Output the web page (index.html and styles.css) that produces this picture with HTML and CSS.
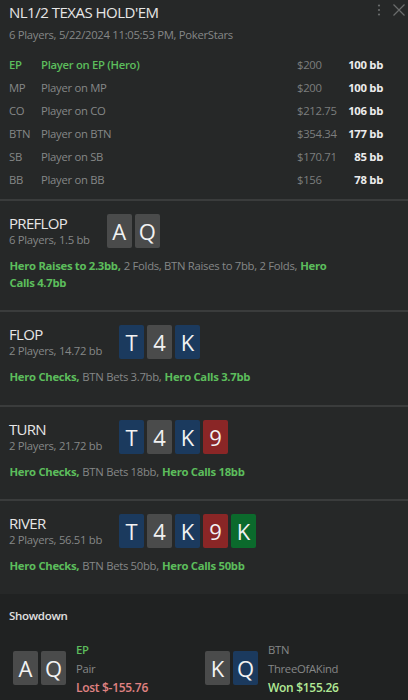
FILE: index.html
```html
<!DOCTYPE html>
<html>
<head>
<meta charset="utf-8">
<link rel="stylesheet" href="styles.css">
</head>
<body>
<div class="panel">
  <section class="header">
    <div class="title-row">
      <h1 class="title">NL1/2 TEXAS HOLD'EM</h1>
      <div class="tools">
        <svg class="kebab" width="4" height="12" viewBox="0 0 4 12"><circle cx="2" cy="1.5" r="1.1" fill="#6a6c6c"/><circle cx="2" cy="6" r="1.1" fill="#6a6c6c"/><circle cx="2" cy="10.5" r="1.1" fill="#6a6c6c"/></svg>
        <svg class="close" width="12" height="12" viewBox="0 0 12 12"><path d="M0.5 0.5 L11.5 11.5 M11.5 0.5 L0.5 11.5" stroke="#6a6c6c" stroke-width="1.2"/></svg>
      </div>
    </div>
    <div class="subtitle">6 Players, 5/22/2024 11:05:53 PM, PokerStars</div>
    <div class="players">
      <div class="prow hero"><span class="pos">EP</span><span class="pname">Player on EP (Hero)</span><span class="stack">$200</span><span class="bb">100 bb</span></div>
      <div class="prow"><span class="pos">MP</span><span class="pname">Player on MP</span><span class="stack">$200</span><span class="bb">100 bb</span></div>
      <div class="prow"><span class="pos">CO</span><span class="pname">Player on CO</span><span class="stack">$212.75</span><span class="bb">106 bb</span></div>
      <div class="prow"><span class="pos">BTN</span><span class="pname">Player on BTN</span><span class="stack">$354.34</span><span class="bb">177 bb</span></div>
      <div class="prow"><span class="pos">SB</span><span class="pname">Player on SB</span><span class="stack">$170.71</span><span class="bb">85 bb</span></div>
      <div class="prow"><span class="pos">BB</span><span class="pname">Player on BB</span><span class="stack">$156</span><span class="bb">78 bb</span></div>
    </div>
  </section>

  <section class="street">
    <div class="street-head">
      <div class="street-info">
        <div class="street-name">PREFLOP</div>
        <div class="street-sub">6 Players, 1.5 bb</div>
      </div>
      <div class="cards">
        <span class="card gray">A</span><span class="card gray">Q</span>
      </div>
    </div>
    <p class="actions"><b>Hero Raises to 2.3bb,</b> 2 Folds, BTN Raises to 7bb, 2 Folds, <b>Hero</b> <b>Calls 4.7bb</b></p>
  </section>

  <section class="street">
    <div class="street-head">
      <div class="street-info">
        <div class="street-name">FLOP</div>
        <div class="street-sub">2 Players, 14.72 bb</div>
      </div>
      <div class="cards">
        <span class="card blue">T</span><span class="card gray">4</span><span class="card blue">K</span>
      </div>
    </div>
    <p class="actions"><b>Hero Checks,</b> BTN Bets 3.7bb, <b>Hero Calls 3.7bb</b></p>
  </section>

  <section class="street">
    <div class="street-head">
      <div class="street-info">
        <div class="street-name">TURN</div>
        <div class="street-sub">2 Players, 21.72 bb</div>
      </div>
      <div class="cards">
        <span class="card blue">T</span><span class="card gray">4</span><span class="card blue">K</span><span class="card red">9</span>
      </div>
    </div>
    <p class="actions"><b>Hero Checks,</b> BTN Bets 18bb, <b>Hero Calls 18bb</b></p>
  </section>

  <section class="street">
    <div class="street-head">
      <div class="street-info">
        <div class="street-name">RIVER</div>
        <div class="street-sub">2 Players, 56.51 bb</div>
      </div>
      <div class="cards">
        <span class="card blue">T</span><span class="card gray">4</span><span class="card blue">K</span><span class="card red">9</span><span class="card green">K</span>
      </div>
    </div>
    <p class="actions"><b>Hero Checks,</b> BTN Bets 50bb, <b>Hero Calls 50bb</b></p>
  </section>

  <section class="showdown">
    <div class="sd-title">Showdown</div>
    <div class="sd-grid">
      <div class="sd-player">
        <div class="cards">
          <span class="card gray">A</span><span class="card gray">Q</span>
        </div>
        <div class="sd-info">
          <div class="sd-pos hero-pos">EP</div>
          <div class="sd-hand">Pair</div>
          <div class="sd-result lost">Lost $-155.76</div>
        </div>
      </div>
      <div class="sd-player">
        <div class="cards">
          <span class="card gray">K</span><span class="card blue">Q</span>
        </div>
        <div class="sd-info">
          <div class="sd-pos">BTN</div>
          <div class="sd-hand">ThreeOfAKind</div>
          <div class="sd-result won">Won $155.26</div>
        </div>
      </div>
    </div>
  </section>
</div>
</body>
</html>
```

FILE: styles.css
```css
* { box-sizing: border-box; }
html, body {
  margin: 0;
  padding: 0;
  background: #262828;
}
body {
  font-family: "Open Sans", "Noto Sans", sans-serif;
  color: #8c8c8c;
  width: 408px;
  height: 700px;
  overflow: hidden;
  letter-spacing: -0.3px;
}
.panel {
  display: flex;
  flex-direction: column;
}
.header {
  padding: 1px 0 8px 9px;
}
.title-row {
  display: flex;
  justify-content: space-between;
  align-items: flex-start;
}
.title {
  margin: 0;
  font-size: 15px;
  font-weight: 400;
  line-height: 22px;
  color: #e6e6e6;
  letter-spacing: -0.5px;
}
.tools {
  display: flex;
  align-items: center;
  gap: 12px;
  padding: 3px 3px 0 0;
}
.subtitle {
  margin-top: 4px;
  font-size: 11.3px;
  line-height: 16px;
  color: #858787;
}
.players {
  margin-top: 10px;
  padding-right: 25px;
}
.prow {
  display: grid;
  grid-template-columns: 32px 1fr 42px 44px;
  height: 23px;
  align-items: center;
  font-size: 11.3px;
  color: #858787;
  white-space: nowrap;
}
.prow .bb {
  text-align: right;
  font-weight: 700;
  color: #ececec;
}
.prow .stack { color: #7c7e7e; }
.prow.hero .pos, .prow.hero .pname {
  color: #5cbd5c;
  font-weight: 600;
}
.street {
  border-top: 2px solid #3a3c3c;
  padding: 13px 9px 19px;
}
.street-head {
  display: flex;
  align-items: center;
  gap: 17px;
}
.street-name {
  font-size: 15px;
  line-height: 18px;
  color: #e6e6e6;
  letter-spacing: -0.7px;
}
.street-sub {
  font-size: 11.3px;
  line-height: 16px;
  color: #858787;
}
.cards {
  display: flex;
  gap: 3px;
  letter-spacing: 0;
}
.card {
  width: 25px;
  height: 34px;
  border-radius: 2px;
  display: flex;
  align-items: center;
  justify-content: center;
  font-size: 22px;
  color: #f2f2f2;
}
.card.gray { background: #4a4b4b; }
.card.blue { background: #1b3a5e; }
.card.red { background: #8a2626; }
.card.green { background: #0b6a2c; }
.actions {
  margin: 10px 0 0;
  font-size: 11.3px;
  line-height: 16.5px;
  color: #858787;
  padding-right: 60px;
}
.actions b {
  color: #5cbd5c;
  font-weight: 700;
  margin: 0 0.5px;
}
.showdown {
  background: #202222;
  padding: 14px 9px 0;
  flex: 1;
  min-height: 110px;
}
.sd-title {
  font-size: 11.5px;
  font-weight: 600;
  color: #e0e0e0;
  line-height: 16px;
}
.sd-grid {
  margin-top: 16px;
  display: grid;
  grid-template-columns: 192px 1fr;
  padding-left: 4px;
}
.sd-player {
  display: flex;
  align-items: center;
  gap: 10px;
}
.sd-info {
  display: flex;
  flex-direction: column;
  font-size: 11.3px;
  line-height: 19px;
}
.sd-pos { color: #858787; }
.sd-pos.hero-pos { color: #5cbd5c; font-weight: 600; }
.sd-hand { color: #858787; }
.sd-result { font-size: 12px; font-weight: 600; }
.lost { color: #e08282; }
.won { color: #b2ea96; }
```
